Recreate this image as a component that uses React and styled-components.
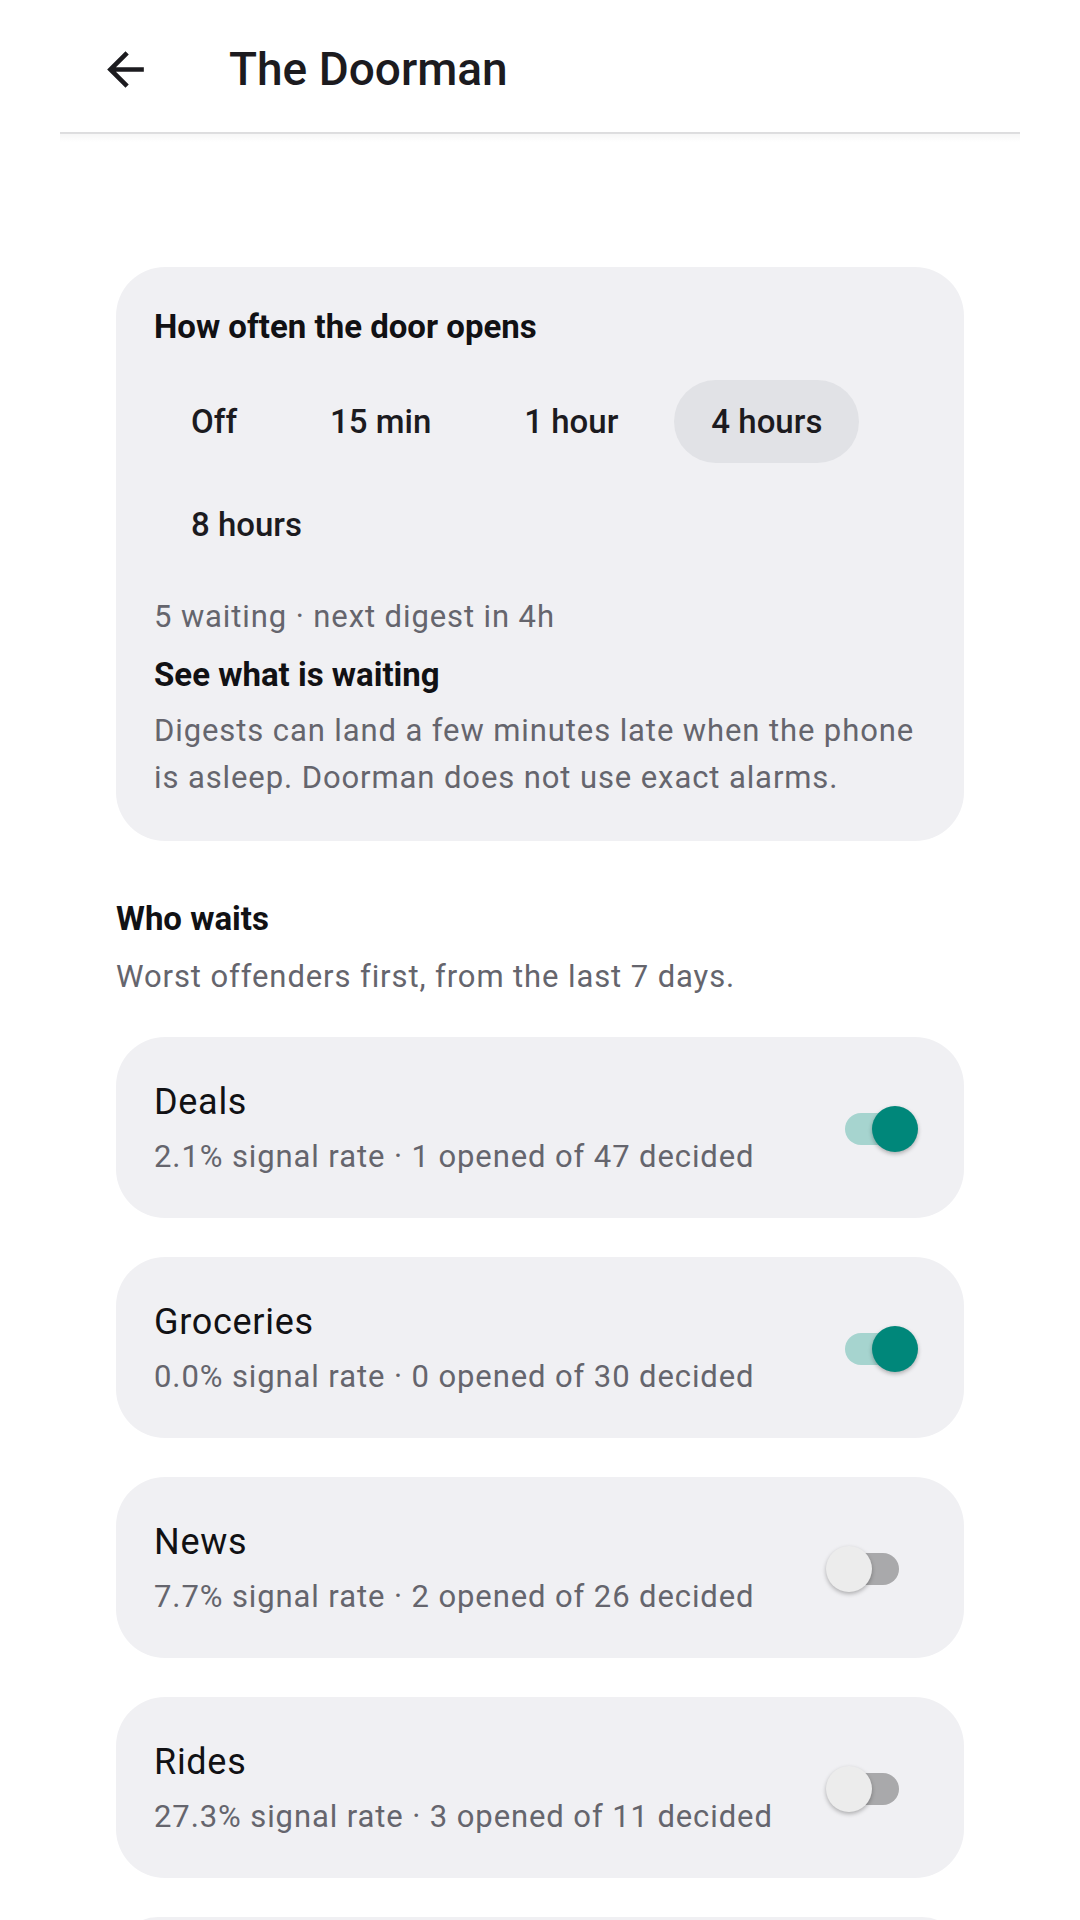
import React from "react";
import styled, { createGlobalStyle } from "styled-components";

const Global = createGlobalStyle`
  html, body { margin: 0; padding: 0; background: #ffffff; }
  body { font-family: Roboto, "Noto Sans", "Liberation Sans", sans-serif; color: #1c1b1f; -webkit-font-smoothing: antialiased; }
  * { box-sizing: border-box; }
`;

const Page = styled.div`
  width: 1080px;
  min-height: 1920px;
  background: #fff;
`;

const TopBar = styled.header`
  position: relative;
  margin: 0 60px;
  height: 134px;
  display: flex;
  align-items: center;
  padding: 6px 0 0 38px;
  background: #fff;
  border-bottom: 2px solid #e6e6e8;

  &::after {
    content: "";
    position: absolute;
    left: 0;
    right: 0;
    top: 100%;
    height: 10px;
    background: linear-gradient(to bottom, rgba(0, 0, 0, 0.045), rgba(0, 0, 0, 0));
  }
`;

const BackButton = styled.button`
  width: 55px;
  height: 55px;
  padding: 0;
  border: none;
  background: transparent;
  display: flex;
  align-items: center;
  justify-content: center;
  color: #1c1b1f;
`;

const Title = styled.h1`
  margin: 0 0 0 76px;
  font-size: 46px;
  font-weight: 500;
  letter-spacing: 0;
  color: #1c1b1f;
`;

const Main = styled.main`
  padding: 133px 116px 0;
  display: flex;
  flex-direction: column;
`;

const Card = styled.section`
  background: #f0f0f3;
  border-radius: 49px;
  padding: 40px 38px 40px;
  display: flex;
  flex-direction: column;
`;

const Heading = styled.h2`
  margin: 0;
  font-size: 33px;
  line-height: 40px;
  font-weight: 700;
  color: #111114;
`;

const ChipRow = styled.div`
  display: flex;
  flex-wrap: wrap;
  column-gap: 19px;
  row-gap: 20px;
  margin-top: 33px;
`;

const Chip = styled.button`
  height: 83px;
  padding: 0 37px;
  border: none;
  border-radius: 42px;
  background: ${(p) => (p.$selected ? "#e1e2e6" : "transparent")};
  font-family: inherit;
  font-size: 33px;
  font-weight: 500;
  color: #1c1b1f;
  display: flex;
  align-items: center;
`;

const Muted = styled.p`
  margin: ${(p) => p.$mt || 0}px 0 0;
  font-size: 31px;
  letter-spacing: 0.9px;
  line-height: ${(p) => p.$lh || 40}px;
  color: #65656d;
`;

const LinkText = styled.div`
  margin-top: 18px;
  font-size: 33px;
  line-height: 40px;
  font-weight: 700;
  color: #111114;
`;

const SectionHead = styled.div`
  margin-top: 58px;
  display: flex;
  flex-direction: column;
  gap: 18px;
`;

const List = styled.div`
  margin-top: 40px;
  display: flex;
  flex-direction: column;
  gap: 39px;
`;

const RowCard = styled.div`
  background: #f0f0f3;
  border-radius: 49px;
  padding: 43px 46px 41px 38px;
  display: flex;
  align-items: center;
  justify-content: space-between;
`;

const RowText = styled.div`
  display: flex;
  flex-direction: column;
  gap: 13px;
`;

const RowTitle = styled.div`
  font-size: 36px;
  letter-spacing: 0.7px;
  line-height: 44px;
  color: #111114;
`;

const RowSub = styled.div`
  font-size: 31px;
  letter-spacing: 0.9px;
  line-height: 40px;
  color: #65656d;
`;

const Switch = styled.div`
  position: relative;
  width: 92px;
  height: 46px;
  flex: none;
`;

const Track = styled.div`
  position: absolute;
  left: 19px;
  top: 7px;
  width: 54px;
  height: 32px;
  border-radius: 16px;
  background: ${(p) => (p.$on ? "#a6d4cf" : "#a9a9ab")};
`;

const Thumb = styled.div`
  position: absolute;
  top: 0;
  left: ${(p) => (p.$on ? 46 : 0)}px;
  width: 46px;
  height: 46px;
  border-radius: 50%;
  background: ${(p) => (p.$on ? "#00877a" : "#ececec")};
  box-shadow: 0 2px 4px rgba(0, 0, 0, 0.28);
`;

const Toggle = ({ on }) => (
  <Switch>
    <Track $on={on} />
    <Thumb $on={on} />
  </Switch>
);

const ArrowBack = () => (
  <svg width="55" height="55" viewBox="0 0 24 24" fill="currentColor">
    <path d="M20 11H7.83l5.59-5.59L12 4l-8 8 8 8 1.41-1.41L7.83 13H20v-2z" />
  </svg>
);

const options = ["Off", "15 min", "1 hour", "4 hours", "8 hours"];

const rows = [
  { name: "Deals", rate: "2.1%", opened: 1, decided: 47, on: true },
  { name: "Groceries", rate: "0.0%", opened: 0, decided: 30, on: true },
  { name: "News", rate: "7.7%", opened: 2, decided: 26, on: false },
  { name: "Rides", rate: "27.3%", opened: 3, decided: 11, on: false },
];

export default function App() {
  return (
    <Page>
      <Global />
      <TopBar>
        <BackButton aria-label="Back">
          <ArrowBack />
        </BackButton>
        <Title>The Doorman</Title>
      </TopBar>
      <Main>
        <Card>
          <Heading>How often the door opens</Heading>
          <ChipRow>
            {options.map((o) => (
              <Chip key={o} $selected={o === "4 hours"}>
                {o}
              </Chip>
            ))}
          </ChipRow>
          <Muted $mt={31}>5 waiting · next digest in 4h</Muted>
          <LinkText>See what is waiting</LinkText>
          <Muted $mt={12} $lh={47}>
            Digests can land a few minutes late when the phone is asleep. Doorman does not use exact alarms.
          </Muted>
        </Card>
        <SectionHead>
          <Heading>Who waits</Heading>
          <Muted>Worst offenders first, from the last 7 days.</Muted>
        </SectionHead>
        <List>
          {rows.map((r) => (
            <RowCard key={r.name}>
              <RowText>
                <RowTitle>{r.name}</RowTitle>
                <RowSub>
                  {r.rate} signal rate · {r.opened} opened of {r.decided} decided
                </RowSub>
              </RowText>
              <Toggle on={r.on} />
            </RowCard>
          ))}
          <RowCard aria-hidden="true" />
        </List>
      </Main>
    </Page>
  );
}
